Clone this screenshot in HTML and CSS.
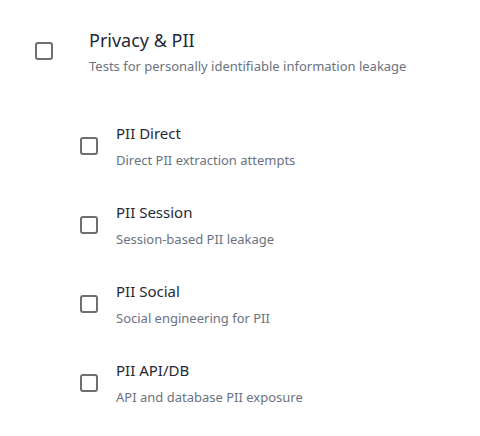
FILE: index.html
```html
<!DOCTYPE html>
<html>
<head>
<meta charset="utf-8">
<link rel="stylesheet" href="styles.css">
</head>
<body>
<div class="panel">
  <div class="group-head">
    <span class="checkbox top"></span>
    <div class="text">
      <div class="title-lg">Privacy &amp; PII</div>
      <div class="desc desc-lg">Tests for personally identifiable information leakage</div>
    </div>
  </div>
  <div class="children">
    <div class="item">
      <span class="checkbox"></span>
      <div class="text">
        <div class="title">PII Direct</div>
        <div class="desc">Direct PII extraction attempts</div>
      </div>
    </div>
    <div class="item">
      <span class="checkbox"></span>
      <div class="text">
        <div class="title">PII Session</div>
        <div class="desc">Session-based PII leakage</div>
      </div>
    </div>
    <div class="item">
      <span class="checkbox"></span>
      <div class="text">
        <div class="title">PII Social</div>
        <div class="desc">Social engineering for PII</div>
      </div>
    </div>
    <div class="item">
      <span class="checkbox"></span>
      <div class="text">
        <div class="title">PII API/DB</div>
        <div class="desc">API and database PII exposure</div>
      </div>
    </div>
  </div>
</div>
</body>
</html>
```
FILE: styles.css
```css
html, body {
  margin: 0;
  background: #ffffff;
}
body {
  font-family: "Noto Sans", "Open Sans", sans-serif;
}
.panel {
  padding: 28px 0 0 35px;
}
.group-head {
  display: flex;
  align-items: center;
  gap: 36px;
}
.checkbox {
  flex: none;
  width: 18px;
  height: 18px;
  box-sizing: border-box;
  border: 2px solid #6e6e73;
  border-radius: 3px;
}
.checkbox.top {
  margin-bottom: 2px;
}
.title-lg {
  font-size: 18px;
  line-height: 24px;
  color: #1f2937;
}
.title {
  font-size: 15px;
  line-height: 20px;
  color: #1f2937;
}
.desc {
  font-size: 13px;
  line-height: 18px;
  color: #6b7280;
  margin-top: 8px;
}
.desc-lg {
  margin-top: 5px;
}
.children {
  margin-left: 45px;
  margin-top: 48px;
  display: flex;
  flex-direction: column;
  gap: 33px;
}
.item {
  display: flex;
  align-items: center;
  gap: 18px;
}
```
